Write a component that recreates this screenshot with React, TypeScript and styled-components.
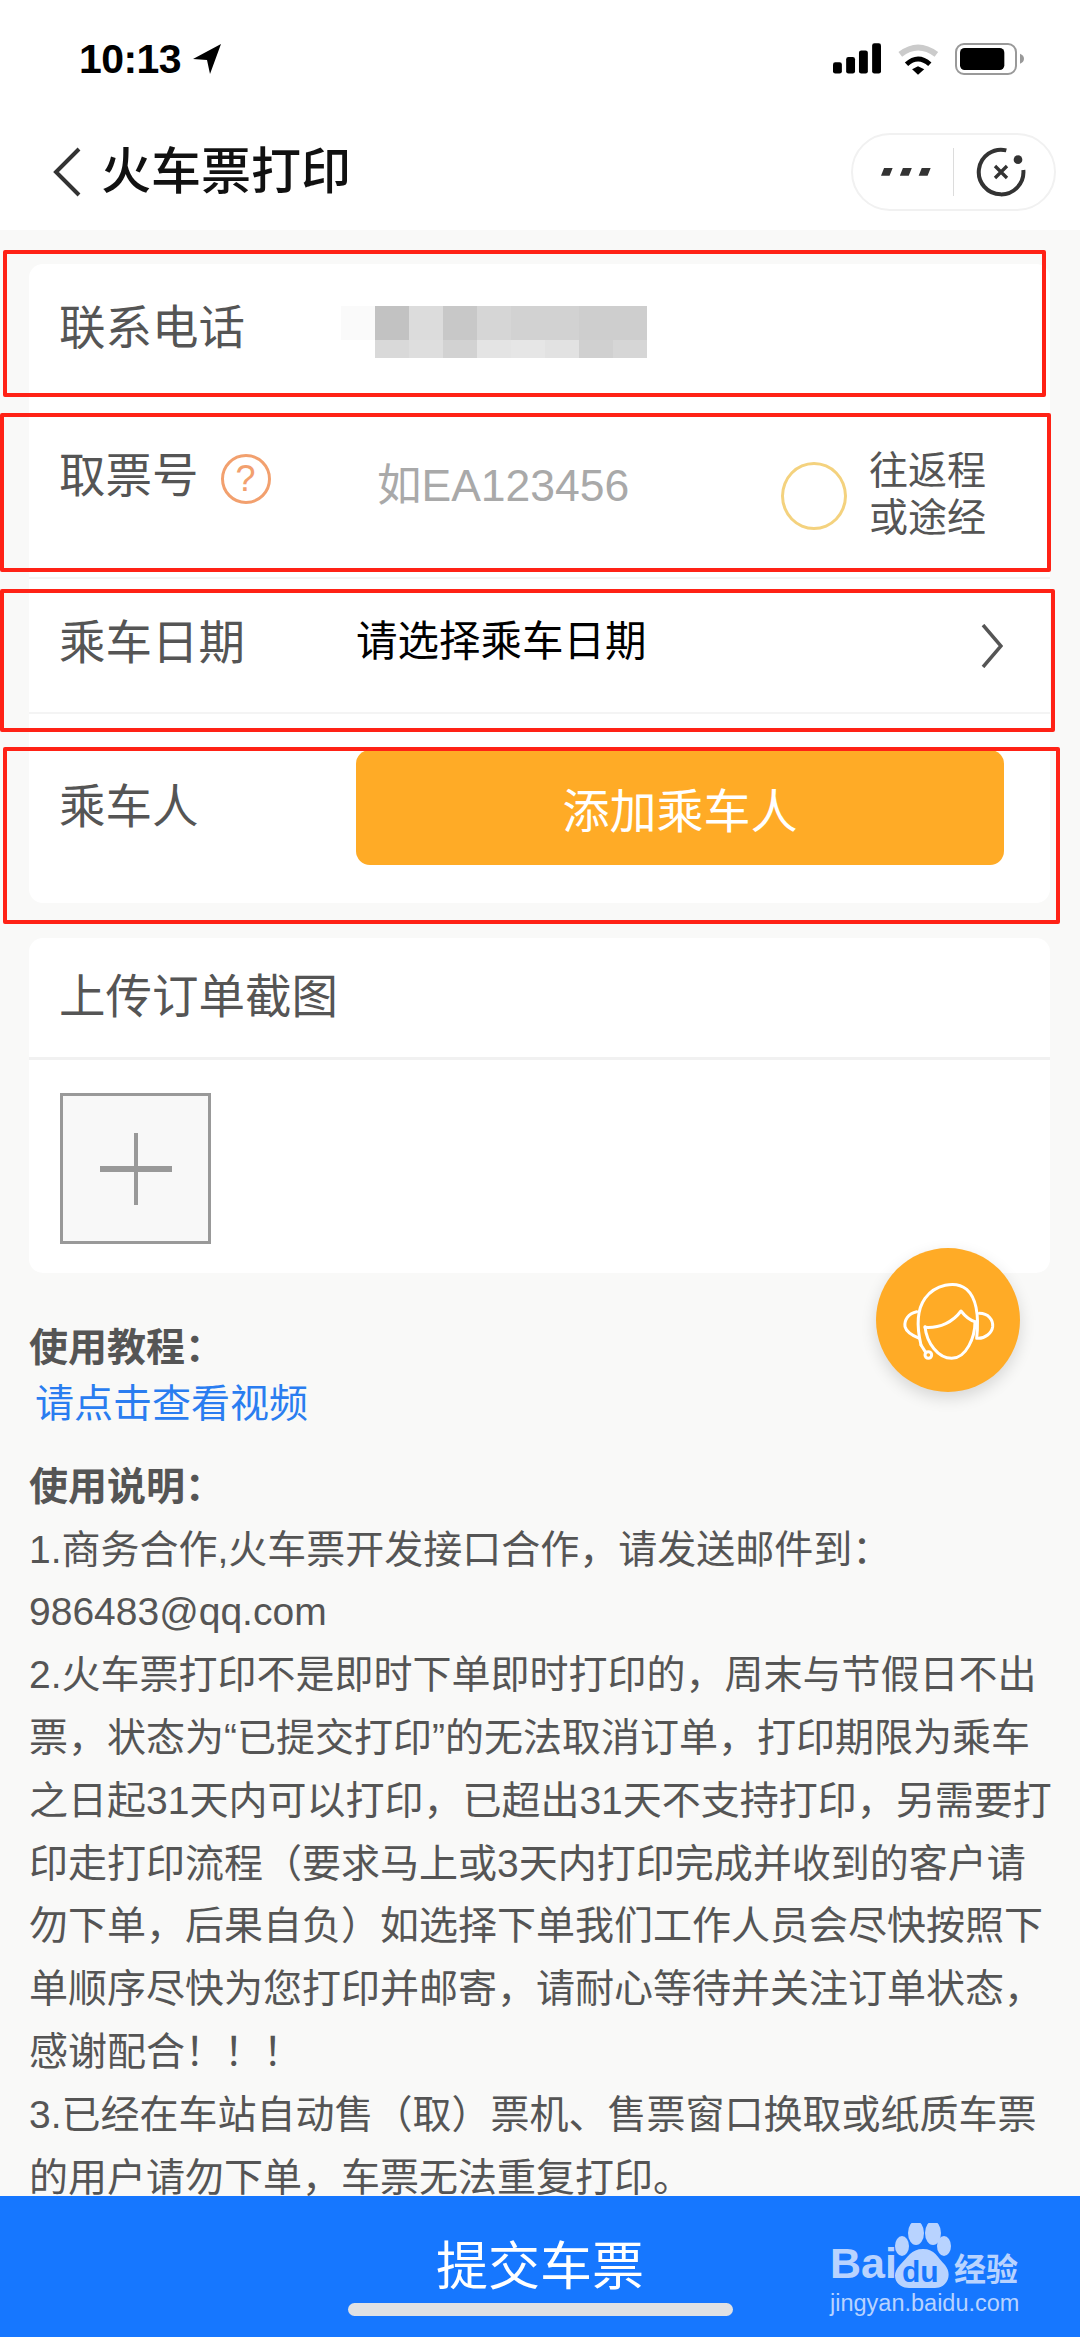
import React from "react";
import styled, { createGlobalStyle } from "styled-components";

const Global = createGlobalStyle`
  html, body { margin: 0; padding: 0; background: #f9f9f8; }
  * { box-sizing: border-box; }
  body { font-family: "Liberation Sans", "Noto Sans CJK SC", sans-serif; }
`;

const Page = styled.div`
  position: relative;
  width: 1080px;
  height: 2337px;
  display: flex;
  flex-direction: column;
  overflow: hidden;
  background: #f9f9f8;
`;

const StatusBar = styled.div`
  height: 114px;
  padding: 4px 56px 0 79px;
  display: flex;
  align-items: center;
  justify-content: space-between;
  background: #fff;
`;
const TimeGroup = styled.div`
  display: flex;
  align-items: center;
  gap: 12px;
`;
const Time = styled.span`
  font-size: 41px;
  font-weight: 700;
  letter-spacing: -0.6px;
  color: #000;
`;
const StatusIcons = styled.div`
  display: flex;
  align-items: center;
  gap: 16px;
`;

const Header = styled.div`
  height: 116px;
  padding: 0 24px 0 53px;
  display: flex;
  align-items: center;
  background: #fff;
`;
const Title = styled.h1`
  margin: 0 0 0 20px;
  font-size: 50px;
  font-weight: 500;
  color: #111;
  line-height: 60px;
`;
const Capsule = styled.div`
  margin-left: auto;
  width: 205px;
  height: 78px;
  border: 2px solid #f1f1f1;
  border-radius: 39px;
  display: flex;
  align-items: center;
  background: #fff;
`;
const CapsulePart = styled.div<{ $left?: number; $right?: number }>`
  flex: 1;
  padding: 0 ${(p) => p.$right ?? 0}px 0 ${(p) => p.$left ?? 0}px;
  display: flex;
  justify-content: center;
  align-items: center;
`;
const CapsuleDivider = styled.div`
  width: 1px;
  height: 48px;
  background: #dcdcdc;
`;

const Main = styled.main`
  flex: 1;
  min-height: 0;
  padding: 34px 30px 0 29px;
`;
const Card = styled.section`
  background: #fff;
  border-radius: 14px;
  overflow: hidden;
`;
const Row = styled.div<{ $height: number; $line?: boolean }>`
  height: ${(p) => p.$height}px;
  padding-left: 30px;
  display: flex;
  align-items: flex-start;
  border-bottom: ${(p) => (p.$line ? "2px solid #f4f4f4" : "none")};
`;
const LabelCol = styled.div<{ $top: number; $width?: number }>`
  width: ${(p) => p.$width ?? 297}px;
  flex: none;
  margin-top: ${(p) => p.$top}px;
  display: flex;
  align-items: center;
`;
const Label = styled.span`
  font-size: 46.5px;
  line-height: 60px;
  color: #555;
`;
const HelpMark = styled.span`
  width: 50px;
  height: 50px;
  margin: 6px 0 0 22px;
  border: 3px solid #f2a06e;
  border-radius: 50%;
  display: flex;
  align-items: center;
  justify-content: center;
  font-size: 36px;
  font-weight: 400;
  color: #f2a06e;
`;
const Mosaic = styled.div`
  margin-top: 42px;
  display: grid;
  grid-template-columns: repeat(9, 34px);
  grid-template-rows: 34px 18px;
`;
const MosaicCell = styled.div<{ $c: string }>`
  background: ${(p) => p.$c};
`;
const Placeholder = styled.span`
  margin: 42px 0 0 21px;
  font-size: 44.5px;
  line-height: 60px;
  color: #a9a9a9;
`;
const Radio = styled.span`
  margin: 48px 22px 0 auto;
  width: 66px;
  height: 68px;
  border: 3px solid #f4d27e;
  border-radius: 50%;
  flex: none;
`;
const RadioText = styled.div`
  margin: 33px 64px 0 0;
  font-size: 39px;
  line-height: 47px;
  color: #555;
  flex: none;
`;
const DateValue = styled.span`
  margin-top: 33px;
  font-size: 41.5px;
  line-height: 60px;
  color: #000;
`;
const ChevronWrap = styled.span`
  margin: 45px 47px 0 auto;
  display: flex;
`;
const AddButton = styled.button`
  margin-top: 36px;
  width: 648px;
  height: 115px;
  border: none;
  border-radius: 14px;
  background: #ffab26;
  color: #fff;
  font: inherit;
  font-size: 47px;
`;

const UploadCard = styled(Card)`
  margin-top: 35px;
  height: 335px;
`;
const UploadHead = styled.div`
  height: 122px;
  padding: 29px 0 0 30px;
  border-bottom: 3px solid #f1f1f1;
`;
const UploadBody = styled.div`
  padding: 33px 0 0 31px;
`;
const PlusBox = styled.div`
  width: 151px;
  height: 151px;
  border: 3px solid #999;
  background: #f8f8f8;
  display: flex;
  align-items: center;
  justify-content: center;
`;

const Help = styled.div`
  padding-top: 44px;
  color: #555;
  font-size: 39px;
  line-height: 62.8px;
`;
const HelpTitle = styled.div<{ $top?: number }>`
  margin-top: ${(p) => p.$top ?? 0}px;
  font-weight: 700;
`;
const VideoLink = styled.div`
  padding-left: 6px;
  line-height: 47px;
  color: #2a7df0;
`;
const HelpLine = styled.div`
  white-space: nowrap;
  &:last-child {
    margin-top: 12px;
    line-height: 38px;
  }
`;

const Fab = styled.div`
  position: absolute;
  left: 876px;
  top: 1248px;
  width: 144px;
  height: 144px;
  border-radius: 50%;
  background: #ffab26;
  box-shadow: 0 6px 16px rgba(0, 0, 0, 0.14);
  display: flex;
  align-items: center;
  justify-content: center;
`;

const SubmitBar = styled.div`
  flex: none;
  height: 141px;
  padding-top: 41px;
  background: #1677ff;
  text-align: center;
  color: #fff;
  font-size: 52px;
  line-height: 60px;
`;
const HomeIndicator = styled.div`
  position: absolute;
  left: 348px;
  top: 2303px;
  width: 385px;
  height: 13px;
  border-radius: 7px;
  background: #dfe1e4;
`;

const RedBox = styled.div<{ $x: number; $y: number; $w: number; $h: number }>`
  position: absolute;
  left: ${(p) => p.$x}px;
  top: ${(p) => p.$y}px;
  width: ${(p) => p.$w}px;
  height: ${(p) => p.$h}px;
  border: 4px solid #ff2216;
  border-radius: 2px;
  pointer-events: none;
`;

const Watermark = styled.div`
  position: absolute;
  left: 830px;
  top: 2223px;
  width: 192px;
  height: 94px;
  color: #b8d3ff;
`;
const WmBai = styled.span`
  position: absolute;
  left: 0;
  top: 16px;
  font-size: 43px;
  line-height: 48px;
  font-weight: 700;
`;
const WmPaw = styled.svg`
  position: absolute;
  left: 63px;
  top: 0;
`;
const WmDu = styled.span`
  position: absolute;
  left: 72px;
  top: 32px;
  font-size: 30px;
  line-height: 34px;
  font-weight: 700;
  color: #1677ff;
`;
const WmCn = styled.span`
  position: absolute;
  left: 124px;
  top: 30px;
  font-size: 32px;
  line-height: 34px;
  font-weight: 700;
`;
const WmUrl = styled.span`
  position: absolute;
  left: 0;
  top: 67px;
  font-size: 23.5px;
  line-height: 27px;
  white-space: nowrap;
`;

const mosaic = [
  "#fafafa", "#c2c2c2", "#dcdcdc", "#c8c8c8", "#d6d6d6", "#d2d2d2", "#d2d2d2", "#cecece", "#cecece",
  "#ffffff", "#d9d9d9", "#dedede", "#d2d2d2", "#e4e4e4", "#e6e6e6", "#e2e2e2", "#d0d0d0", "#d6d6d6",
];

const lines = [
  "1.商务合作,火车票开发接口合作，请发送邮件到：",
  "986483@qq.com",
  "2.火车票打印不是即时下单即时打印的，周末与节假日不出",
  "票，状态为“已提交打印”的无法取消订单，打印期限为乘车",
  "之日起31天内可以打印，已超出31天不支持打印，另需要打",
  "印走打印流程（要求马上或3天内打印完成并收到的客户请",
  "勿下单，后果自负）如选择下单我们工作人员会尽快按照下",
  "单顺序尽快为您打印并邮寄，请耐心等待并关注订单状态，",
  "感谢配合！！！",
  "3.已经在车站自动售（取）票机、售票窗口换取或纸质车票",
  "的用户请勿下单，车票无法重复打印。",
];

export default function App() {
  return (
    <Page>
      <Global />
      <StatusBar>
        <TimeGroup>
          <Time>10:13</Time>
          <svg width="28" height="30" viewBox="0 0 28 30">
            <path d="M28 0 L0 15 L14 16 L17 30 Z" fill="#000" />
          </svg>
        </TimeGroup>
        <StatusIcons>
          <svg width="48" height="32" viewBox="38 130 146 96">
            <rect x="38" y="188" width="27" height="34" rx="7" fill="#000" />
            <rect x="78" y="172" width="27" height="50" rx="7" fill="#000" />
            <rect x="117" y="152" width="27" height="70" rx="7" fill="#000" />
            <rect x="157" y="130" width="27" height="92" rx="7" fill="#000" />
          </svg>
          <svg width="42" height="32" viewBox="228 126 128 96">
            <path d="M238 160 Q292 118 348 160" fill="none" stroke="#cbcbcb" strokeWidth="18" />
            <path d="M257 190 Q292 158 328 190" fill="none" stroke="#000" strokeWidth="15" />
            <path d="M274 205 L292 196 L311 205 L292 222 Z" fill="#000" />
          </svg>
          <svg width="69" height="32" viewBox="405 128 207 96">
            <rect x="408" y="131" width="180" height="90" rx="24" fill="none" stroke="#999" strokeWidth="6" />
            <rect x="420" y="143" width="133" height="66" rx="14" fill="#000" />
            <path d="M600 160 Q612 165 612 175 Q612 185 600 190 Z" fill="#999" />
          </svg>
        </StatusIcons>
      </StatusBar>

      <Header>
        <svg width="28" height="50" viewBox="0 0 28 50">
          <path d="M26 2 L3 25 L26 48" fill="none" stroke="#333" strokeWidth="4" />
        </svg>
        <Title>火车票打印</Title>
        <Capsule>
          <CapsulePart $left={6}>
            <svg width="50" height="10" viewBox="188 505 146 24">
              <path d="M197 505 H222 L213 528 H188 Z M252 505 H278 L269 528 H243 Z M307 505 H333 L324 528 H298 Z" fill="#333" />
            </svg>
          </CapsulePart>
          <CapsuleDivider />
          <CapsulePart $right={6}>
            <svg width="50" height="50" viewBox="465 443 150 150">
              <path d="M556 453 A67 67 0 1 0 607 512" fill="none" stroke="#333" strokeWidth="12" />
              <circle cx="591" cy="481" r="13" fill="#333" />
              <path d="M522 500 L558 536 M558 500 L522 536" stroke="#333" strokeWidth="10" />
            </svg>
          </CapsulePart>
        </Capsule>
      </Header>

      <Main>
        <Card>
          <Row $height={150}>
            <LabelCol $top={34} $width={282}>
              <Label>联系电话</Label>
            </LabelCol>
            <Mosaic>
              {mosaic.map((c, i) => (
                <MosaicCell key={i} $c={c} />
              ))}
            </Mosaic>
          </Row>
          <Row $height={165} $line>
            <LabelCol $top={32}>
              <Label>取票号</Label>
              <HelpMark>?</HelpMark>
            </LabelCol>
            <Placeholder>如EA123456</Placeholder>
            <Radio />
            <RadioText>
              往返程
              <br />
              或途经
            </RadioText>
          </Row>
          <Row $height={135} $line>
            <LabelCol $top={34}>
              <Label>乘车日期</Label>
            </LabelCol>
            <DateValue>请选择乘车日期</DateValue>
            <ChevronWrap>
              <svg width="22" height="44" viewBox="0 0 22 44">
                <path d="M2 1 L20 22 L2 43" fill="none" stroke="#555" strokeWidth="3.5" />
              </svg>
            </ChevronWrap>
          </Row>
          <Row $height={189}>
            <LabelCol $top={63}>
              <Label>乘车人</Label>
            </LabelCol>
            <AddButton>添加乘车人</AddButton>
          </Row>
        </Card>

        <UploadCard>
          <UploadHead>
            <Label>上传订单截图</Label>
          </UploadHead>
          <UploadBody>
            <PlusBox>
              <svg width="72" height="72" viewBox="0 0 72 72">
                <rect x="0" y="33" width="72" height="6" fill="#999" />
                <rect x="34" y="0" width="4" height="72" fill="#999" />
              </svg>
            </PlusBox>
          </UploadBody>
        </UploadCard>

        <Help>
          <HelpTitle>使用教程：</HelpTitle>
          <VideoLink>请点击查看视频</VideoLink>
          <HelpTitle $top={29}>使用说明：</HelpTitle>
          {lines.map((l) => (
            <HelpLine key={l}>{l}</HelpLine>
          ))}
        </Help>
      </Main>

      <SubmitBar>提交车票</SubmitBar>
      <HomeIndicator />

      <Fab>
        <svg width="144" height="144" viewBox="48 54 432 432">
          <g fill="none" stroke="#fff" strokeWidth="9" strokeLinecap="round" strokeLinejoin="round">
            <path d="M183 345 C170 290 170 240 195 205 C225 165 285 150 320 178 C345 200 358 250 350 325" />
            <path d="M195 290 C200 340 235 385 275 385 C320 385 345 320 345 275" />
            <path d="M195 292 C240 295 280 275 303 243 C320 265 335 272 345 275" />
            <path d="M170 245 C145 250 132 270 135 290 C140 310 165 320 178 325" />
            <path d="M358 250 C385 250 400 270 398 290 C395 310 375 325 355 325" />
            <path d="M183 345 L197 367" />
            <circle cx="205" cy="375" r="10" />
          </g>
        </svg>
      </Fab>

      <Watermark>
        <WmBai>Bai</WmBai>
        <WmPaw width="58" height="66" viewBox="0 0 58 66">
          <ellipse cx="23" cy="10" rx="8" ry="12" fill="#b8d3ff" />
          <ellipse cx="40" cy="10" rx="8" ry="12" fill="#b8d3ff" />
          <ellipse cx="9" cy="23" rx="7" ry="10" fill="#b8d3ff" />
          <ellipse cx="51" cy="23" rx="7" ry="10" fill="#b8d3ff" />
          <path d="M30 26 C42 26 44 34 52 42 C60 52 54 65 42 65 L16 65 C3 65 -3 52 7 42 C15 34 18 26 30 26 Z" fill="#b8d3ff" />
        </WmPaw>
        <WmDu>du</WmDu>
        <WmCn>经验</WmCn>
        <WmUrl>jingyan.baidu.com</WmUrl>
      </Watermark>

      <RedBox $x={3} $y={250} $w={1043} $h={147} />
      <RedBox $x={0} $y={413} $w={1051} $h={159} />
      <RedBox $x={0} $y={589} $w={1055} $h={143} />
      <RedBox $x={3} $y={747} $w={1057} $h={177} />
    </Page>
  );
}
